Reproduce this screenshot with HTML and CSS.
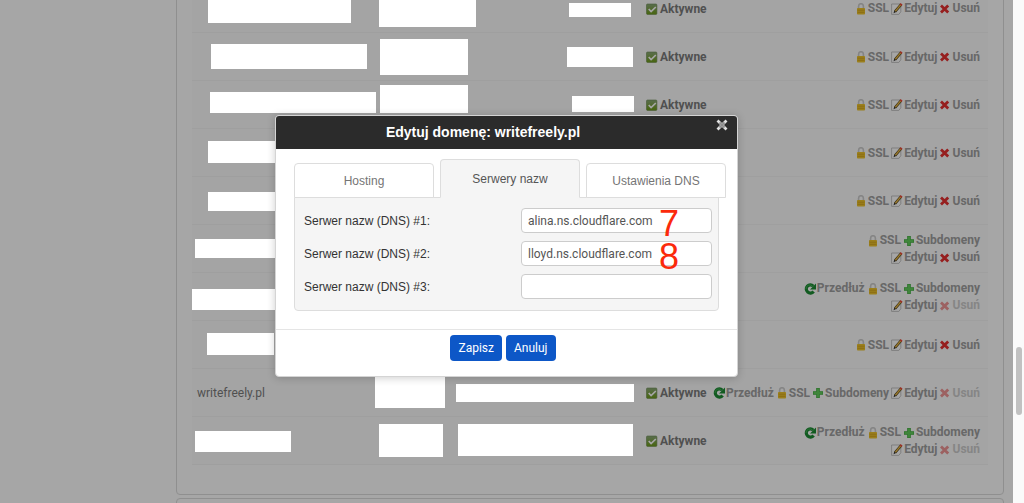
FILE: index.html
```html
<!DOCTYPE html>
<html lang="pl">
<head>
  <meta charset="utf-8">
  <title>Edytuj domenę: writefreely.pl</title>
  <link rel="stylesheet" href="styles.css">
</head>
<body>
  <svg class="sprite" aria-hidden="true">
    <linearGradient id="green" x1="0" y1="0" x2="0" y2="1">
      <stop offset="0" stop-color="#8aa878"/>
      <stop offset="1" stop-color="#6f9d18"/>
    </linearGradient>
    <symbol id="check" viewBox="0 0 12 12">
      <rect x=".5" y="1" width="10.4" height="10.4" rx="1" fill="url(#green)" stroke="#6c8b50" stroke-width=".6"/>
      <path d="M2.7 6l2.4 2.6L9.8 4" fill="none" stroke="#fff" stroke-width="1.7"/>
    </symbol>
    <symbol id="lock" viewBox="0 0 12 12">
      <path d="M3.6 6V3.3a2.4 2.6 0 0 1 4.8 0V6" fill="none" stroke="#cdcdcd" stroke-width="1.6"/>
      <rect x="2" y="5" width="8" height="6.6" rx=".8" fill="#eec42c"/>
      <path d="M2.5 7.2h7M2.5 9.3h7" stroke="#cf9f1c" stroke-width=".8"/>
    </symbol>
    <symbol id="edit" viewBox="0 0 12 12">
      <path d="M.6 1h9.2v7.8l-2 2.6H.6z" fill="#fff" stroke="#b4b4b4" stroke-width=".8"/>
      <path d="M4 8.6l6-7" stroke="#54431f" stroke-width="2.6"/>
      <path d="M4.2 8.4l5.6-6.6" stroke="#edbc45" stroke-width="1.4"/>
      <path d="M2.6 10.2l.6-2.4 1.6 1.3z" fill="#222"/>
      <path d="M9.6 2.1l1-1.2" stroke="#ef4a3a" stroke-width="2.6"/>
    </symbol>
    <symbol id="cross" viewBox="0 0 12 12">
      <path d="M2 2.6l7.2 7M9.2 2.6l-7.2 7" stroke="#e63030" stroke-width="2.8"/>
    </symbol>
    <symbol id="plus" viewBox="0 0 12 12">
      <path d="M6 1v10M1 6h10" stroke="#3fa83f" stroke-width="3.6"/>
      <path d="M6 1.5v9M1.5 6h9" stroke="#62cc5b" stroke-width="2.4"/>
    </symbol>
    <symbol id="renew" viewBox="0 0 12 12">
      <path d="M9.3 3.1A4.1 4.1 0 1 0 9.6 8.5" fill="none" stroke="#1c8c34" stroke-width="3.2"/>
      <path d="M12 .4v6H6z" fill="#1c8c34"/>
      <path d="M8.5 3.1A3.8 3.8 0 0 0 2 6" fill="none" stroke="#4bb65c" stroke-width=".8"/>
    </symbol>
  </svg>

  <main class="page">
    <section class="panel domains">
      <table class="domain-table">
        <colgroup>
          <col>
          <col class="col-status">
          <col class="col-actions">
        </colgroup>
        <tr>
          <td></td>
          <td><span class="status"><svg class="icon"><use href="#check"/></svg>Aktywne</span></td>
          <td>
            <div class="actions"><a href="#"><svg class="icon"><use href="#lock"/></svg>SSL</a><a href="#"><svg class="icon"><use href="#edit"/></svg>Edytuj</a><a href="#"><svg class="icon"><use href="#cross"/></svg>Usuń</a></div>
          </td>
        </tr>
        <tr>
          <td></td>
          <td><span class="status"><svg class="icon"><use href="#check"/></svg>Aktywne</span></td>
          <td>
            <div class="actions"><a href="#"><svg class="icon"><use href="#lock"/></svg>SSL</a><a href="#"><svg class="icon"><use href="#edit"/></svg>Edytuj</a><a href="#"><svg class="icon"><use href="#cross"/></svg>Usuń</a></div>
          </td>
        </tr>
        <tr>
          <td></td>
          <td><span class="status"><svg class="icon"><use href="#check"/></svg>Aktywne</span></td>
          <td>
            <div class="actions"><a href="#"><svg class="icon"><use href="#lock"/></svg>SSL</a><a href="#"><svg class="icon"><use href="#edit"/></svg>Edytuj</a><a href="#"><svg class="icon"><use href="#cross"/></svg>Usuń</a></div>
          </td>
        </tr>
        <tr>
          <td></td>
          <td></td>
          <td>
            <div class="actions"><a href="#"><svg class="icon"><use href="#lock"/></svg>SSL</a><a href="#"><svg class="icon"><use href="#edit"/></svg>Edytuj</a><a href="#"><svg class="icon"><use href="#cross"/></svg>Usuń</a></div>
          </td>
        </tr>
        <tr>
          <td></td>
          <td></td>
          <td>
            <div class="actions"><a href="#"><svg class="icon"><use href="#lock"/></svg>SSL</a><a href="#"><svg class="icon"><use href="#edit"/></svg>Edytuj</a><a href="#"><svg class="icon"><use href="#cross"/></svg>Usuń</a></div>
          </td>
        </tr>
        <tr>
          <td></td>
          <td></td>
          <td>
            <div class="actions"><a href="#"><svg class="icon"><use href="#lock"/></svg>SSL</a><a href="#"><svg class="icon"><use href="#plus"/></svg>Subdomeny</a></div>
            <div class="actions"><a href="#"><svg class="icon"><use href="#edit"/></svg>Edytuj</a><a href="#"><svg class="icon"><use href="#cross"/></svg>Usuń</a></div>
          </td>
        </tr>
        <tr>
          <td></td>
          <td></td>
          <td>
            <div class="actions"><a href="#"><svg class="icon"><use href="#renew"/></svg>Przedłuż</a><a href="#"><svg class="icon"><use href="#lock"/></svg>SSL</a><a href="#"><svg class="icon"><use href="#plus"/></svg>Subdomeny</a></div>
            <div class="actions"><a href="#"><svg class="icon"><use href="#edit"/></svg>Edytuj</a><a href="#" class="disabled"><svg class="icon"><use href="#cross"/></svg>Usuń</a></div>
          </td>
        </tr>
        <tr>
          <td></td>
          <td></td>
          <td>
            <div class="actions"><a href="#"><svg class="icon"><use href="#lock"/></svg>SSL</a><a href="#"><svg class="icon"><use href="#edit"/></svg>Edytuj</a><a href="#"><svg class="icon"><use href="#cross"/></svg>Usuń</a></div>
          </td>
        </tr>
        <tr>
          <td>writefreely.pl</td>
          <td><span class="status"><svg class="icon"><use href="#check"/></svg>Aktywne</span></td>
          <td>
            <div class="actions"><a href="#"><svg class="icon"><use href="#renew"/></svg>Przedłuż</a><a href="#"><svg class="icon"><use href="#lock"/></svg>SSL</a><a href="#"><svg class="icon"><use href="#plus"/></svg>Subdomeny</a><a href="#"><svg class="icon"><use href="#edit"/></svg>Edytuj</a><a href="#" class="disabled"><svg class="icon"><use href="#cross"/></svg>Usuń</a></div>
          </td>
        </tr>
        <tr>
          <td></td>
          <td><span class="status"><svg class="icon"><use href="#check"/></svg>Aktywne</span></td>
          <td>
            <div class="actions"><a href="#"><svg class="icon"><use href="#renew"/></svg>Przedłuż</a><a href="#"><svg class="icon"><use href="#lock"/></svg>SSL</a><a href="#"><svg class="icon"><use href="#plus"/></svg>Subdomeny</a></div>
            <div class="actions"><a href="#"><svg class="icon"><use href="#edit"/></svg>Edytuj</a><a href="#" class="disabled"><svg class="icon"><use href="#cross"/></svg>Usuń</a></div>
          </td>
        </tr>
      </table>
    </section>
    <section class="panel"></section>

    <div class="overlay"></div>

    <!-- white boxes over private data -->
    <svg class="redactions" aria-hidden="true">
      <rect x="208" y="0" width="143" height="23"/>
      <rect x="379" y="0" width="97" height="27"/>
      <rect x="569" y="3" width="62" height="14"/>
      <rect x="211" y="44" width="156" height="25"/>
      <rect x="380" y="39" width="88" height="36"/>
      <rect x="567" y="47" width="66" height="20"/>
      <rect x="210" y="92" width="166" height="21"/>
      <rect x="380" y="85" width="88" height="28"/>
      <rect x="572" y="96" width="62" height="16"/>
      <rect x="208" y="141" width="68" height="22"/>
      <rect x="208" y="192" width="67" height="19"/>
      <rect x="195" y="239" width="80" height="19"/>
      <rect x="192" y="289" width="84" height="21"/>
      <rect x="207" y="333" width="67" height="22"/>
      <rect x="375" y="377" width="70" height="31"/>
      <rect x="456" y="384" width="178" height="18"/>
      <rect x="195" y="431" width="96" height="21"/>
      <rect x="379" y="424" width="64" height="33"/>
      <rect x="458" y="424" width="175" height="32"/>
    </svg>

    <div class="modal-layer">
      <form class="modal" role="dialog" aria-labelledby="modalTitle">
        <div class="modal-header">
          <h1 class="modal-title" id="modalTitle">Edytuj domenę: writefreely.pl</h1>
          <button type="button" class="close-btn" aria-label="Zamknij">
            <svg viewBox="0 0 12 12">
              <path d="M1.5 1.5l9 9M10.5 1.5l-9 9" stroke="#e2e2e2" stroke-width="2.8"/>
              <path d="M3.5 3.5l5 5M8.5 3.5l-5 5" stroke="#8d8d8d" stroke-width="1.8"/>
            </svg>
          </button>
        </div>

        <div class="modal-body">
          <div class="tabs">
            <button type="button" class="tab">Hosting</button>
            <button type="button" class="tab active">Serwery nazw</button>
            <button type="button" class="tab">Ustawienia DNS</button>
          </div>
          <div class="tab-content">
            <div class="form-row">
              <label for="dns1">Serwer nazw (DNS) #1:</label>
              <div class="field">
                <input type="text" id="dns1" value="alina.ns.cloudflare.com">
                <span class="step">7</span>
              </div>
            </div>
            <div class="form-row">
              <label for="dns2">Serwer nazw (DNS) #2:</label>
              <div class="field">
                <input type="text" id="dns2" value="lloyd.ns.cloudflare.com">
                <span class="step">8</span>
              </div>
            </div>
            <div class="form-row">
              <label for="dns3">Serwer nazw (DNS) #3:</label>
              <div class="field">
                <input type="text" id="dns3">
              </div>
            </div>
          </div>
        </div>

        <div class="modal-footer">
          <button type="submit" class="btn">Zapisz</button>
          <button type="button" class="btn">Anuluj</button>
        </div>
      </form>
    </div>
  </main>

  <div class="scrollbar"><div class="scrollbar-thumb"></div></div>
</body>
</html>
```
FILE: styles.css
```css
* {
  box-sizing: border-box;
}

body {
  margin: 0;
  height: 100vh;
  display: flex;
  overflow: hidden;
  background: #fff;
  color: #7c7c7c;
  font-family: Roboto, sans-serif;
  font-size: 12px;
}

.sprite {
  position: absolute;
  width: 0;
  height: 0;
}

.page {
  flex: 1;
  position: relative;
  overflow: hidden;
}

.panel {
  margin: 0 9px 3px 176px;
  padding: 15px;
  height: 60px;
  border: 1px solid #dcdcdc;
  border-radius: 4px;
}

/* the list is scrolled, so its top is out of view */
.domains {
  height: auto;
  margin-top: -32px;
  padding-bottom: 29px;
}

.domain-table {
  width: 100%;
  table-layout: fixed;
  border-collapse: collapse;
  background: #fcfcfc;
}

.col-status {
  width: 65px;
}

.col-actions {
  width: 282px;
}

.domain-table td {
  height: 48px;
  padding: 2px 8px 0 5px;
  border-bottom: 1px solid #f5f5f5;
  white-space: nowrap;
}

.icon {
  width: 12px;
  height: 12px;
  flex: none;
}

.status {
  display: flex;
  align-items: center;
  gap: 2px;
  font-weight: 700;
}

.actions {
  display: flex;
  justify-content: flex-end;
  gap: 2px;
  line-height: 17px;
}

.actions a {
  display: flex;
  align-items: center;
  gap: 1px;
  color: #a0a0a0;
  font-weight: 700;
  text-decoration: none;
}

.actions .disabled {
  opacity: 0.5;
}

.overlay {
  position: absolute;
  inset: 0;
  background: rgba(0, 0, 0, 0.35);
}

.redactions {
  position: absolute;
  top: 0;
  left: 0;
  width: 100%;
  height: 100%;
  fill: #fff;
}

.modal-layer {
  position: absolute;
  inset: 0;
  display: flex;
  align-items: flex-start;
  justify-content: center;
  padding-top: 115px;
}

.modal {
  width: 463px;
  max-width: 100%;
  background: #fff;
  border: 1px solid #d4d4d4;
  border-radius: 4px;
  box-shadow: 0 1px 8px rgba(0, 0, 0, 0.2);
  font-family: "Liberation Sans", Arial, sans-serif;
  overflow: hidden;
}

.modal-header {
  display: flex;
  align-items: flex-start;
  height: 33px;
  background: #2b2b2b;
}

.modal-title {
  flex: 1;
  margin: 0;
  padding-left: 10px;
  color: #fff;
  font-size: 14px;
  line-height: 33px;
  text-align: center;
}

.close-btn {
  width: 57px;
  padding: 3px 9px 0 0;
  border: 0;
  background: none;
  text-align: right;
  cursor: pointer;
}

.close-btn svg {
  width: 12px;
  height: 12px;
}

.modal-body {
  padding: 10px 18px 18px;
}

.tabs {
  display: flex;
  align-items: flex-end;
  gap: 6px;
}

.tab {
  flex: none;
  width: 140px;
  height: 35px;
  padding: 0;
  border: 1px solid #ddd;
  border-radius: 4px 4px 0 0;
  background: #fff;
  color: #757575;
  font-family: inherit;
  font-size: 12px;
}

.tab.active {
  height: 39px;
  border-bottom-color: #f5f5f5;
  background: #f5f5f5;
  color: #555;
  z-index: 1;
}

.tab-content {
  display: grid;
  gap: 8px;
  margin: -1px 0 0;
  padding: 10px 6px 11px 9px;
  border: 1px solid #ddd;
  border-radius: 0 0 4px 4px;
  background: #f5f5f5;
  color: #333;
}

.form-row {
  display: flex;
  justify-content: space-between;
  align-items: center;
}

.field {
  position: relative;
  width: 191px;
}

.field input {
  display: block;
  width: 100%;
  height: 25px;
  padding: 1px 6px 0;
  border: 1px solid #ccc;
  border-radius: 4px;
  background: #fff;
  color: #555;
  font-family: Roboto, sans-serif;
  font-size: 12px;
}

.step {
  position: absolute;
  top: 1px;
  right: 33px;
  color: #fb2a0b;
  font-size: 36px;
  line-height: 30px;
  pointer-events: none;
}

.modal-footer {
  display: flex;
  justify-content: center;
  gap: 4px;
  padding: 5px 7px 15px 0;
  border-top: 1px solid #e5e5e5;
}

.btn {
  height: 26px;
  padding: 0 8px;
  border: 0;
  border-radius: 4px;
  background: #0d57c7;
  color: #fff;
  font-family: Roboto, sans-serif;
  font-size: 12px;
  cursor: pointer;
}

.scrollbar {
  width: 11px;
  padding: 347px 2px 0 3px;
  background: #fafafa;
}

.scrollbar-thumb {
  height: 68px;
  border-radius: 3px;
  background: #c1c1c1;
}
```
